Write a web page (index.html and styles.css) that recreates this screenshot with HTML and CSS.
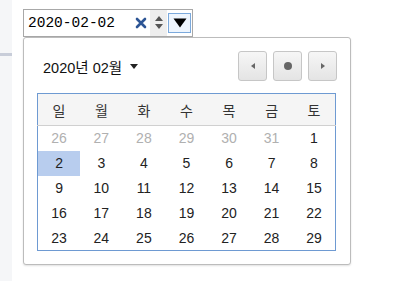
FILE: index.html
```html
<!DOCTYPE html>
<html lang="ko">
<head>
  <meta charset="UTF-8">
  <title>날짜 선택</title>
  <link rel="stylesheet" href="styles.css">
</head>
<body>
  <aside class="side">
    <div class="side-bar"></div>
  </aside>

  <div class="main">
    <div class="field">
      <span class="value">2020-02-02</span>
      <span class="clear">
        <svg width="12" height="12" viewBox="0 0 12 12"><path d="M2 2 L10 10 M10 2 L2 10" stroke="#2d5595" stroke-width="2.6" stroke-linecap="round"/></svg>
      </span>
      <span class="spin">
        <svg width="10" height="16" viewBox="0 0 10 16"><path d="M1 6 L5 1 L9 6 Z M1 9 L9 9 L5 14 Z" fill="#555"/></svg>
      </span>
      <span class="drop">
        <svg width="14" height="10" viewBox="0 0 14 10"><path d="M0.5 0.5 L13.5 0.5 L7 9.5 Z" fill="#000"/></svg>
      </span>
    </div>

    <div class="popup">
      <div class="popup-head">
        <div class="title">2020년 02월
          <svg width="8" height="5" viewBox="0 0 8 5"><path d="M0 0 L8 0 L4 5 Z" fill="#222"/></svg>
        </div>
        <div class="nav">
          <button type="button" class="nav-btn"><svg width="4" height="6" viewBox="0 0 4 6"><path d="M4 0 L0 3 L4 6 Z" fill="#666"/></svg></button>
          <button type="button" class="nav-btn"><svg width="8" height="8" viewBox="0 0 8 8"><circle cx="4" cy="4" r="4" fill="#666"/></svg></button>
          <button type="button" class="nav-btn"><svg width="4" height="6" viewBox="0 0 4 6"><path d="M0 0 L4 3 L0 6 Z" fill="#666"/></svg></button>
        </div>
      </div>

      <table class="cal">
        <tr><th>일</th><th>월</th><th>화</th><th>수</th><th>목</th><th>금</th><th>토</th></tr>
        <tr><td class="other">26</td><td class="other">27</td><td class="other">28</td><td class="other">29</td><td class="other">30</td><td class="other">31</td><td>1</td></tr>
        <tr><td class="selected">2</td><td>3</td><td>4</td><td>5</td><td>6</td><td>7</td><td>8</td></tr>
        <tr><td>9</td><td>10</td><td>11</td><td>12</td><td>13</td><td>14</td><td>15</td></tr>
        <tr><td>16</td><td>17</td><td>18</td><td>19</td><td>20</td><td>21</td><td>22</td></tr>
        <tr><td>23</td><td>24</td><td>25</td><td>26</td><td>27</td><td>28</td><td>29</td></tr>
      </table>
    </div>
  </div>
</body>
</html>
```

FILE: styles.css
```css
* {
  margin: 0;
  padding: 0;
  box-sizing: border-box;
}

body {
  font-family: "Liberation Sans", "Noto Sans CJK KR", sans-serif;
  background-color: #fff;
  color: #222;
  display: flex;
  min-height: 100vh;
}

.side {
  width: 12px;
  background-color: #f5f6f8;
  padding-top: 53px;
}

.side-bar {
  height: 3px;
  background-color: #c8cdd9;
}

.main {
  padding: 9px 0 0 11px;
}

.field {
  width: 170px;
  height: 28px;
  border: 1px solid #a8a8a8;
  display: flex;
  align-items: center;
  background-color: #fff;
}

.value {
  flex: 1;
  padding-left: 4px;
  font-family: "Liberation Mono", monospace;
  font-size: 14.5px;
  color: #000;
}

.clear {
  width: 12px;
  height: 12px;
  margin-right: 3px;
  display: flex;
}

.spin {
  width: 17px;
  align-self: stretch;
  background-color: #eeeeee;
  display: flex;
  align-items: center;
  justify-content: center;
}

.drop {
  width: 23px;
  height: 20px;
  margin: 0 1px 0 1px;
  border: 1px solid #7ba9dc;
  background-color: #eef5fd;
  display: flex;
  align-items: center;
  justify-content: center;
}

.popup {
  width: 328px;
  border: 1px solid #bcbcbc;
  border-radius: 3px;
  box-shadow: 0 1px 2px rgba(0, 0, 0, 0.12);
  padding: 0 13px 13px 13px;
  background-color: #fff;
}

.popup-head {
  display: flex;
  align-items: center;
  justify-content: space-between;
  padding: 13px 0 12px 6px;
}

.title {
  font-size: 14.5px;
  color: #111;
  display: flex;
  align-items: center;
  gap: 8px;
}

.nav {
  display: flex;
  gap: 6px;
}

.nav-btn {
  width: 29px;
  height: 30px;
  border: 1px solid #c6c6c6;
  border-radius: 3px;
  background: linear-gradient(#f6f6f6, #e4e4e4);
  display: flex;
  align-items: center;
  justify-content: center;
}

.cal {
  width: 299px;
  border-collapse: collapse;
  border: 1px solid #6e9ad2;
  table-layout: fixed;
}

.cal th {
  height: 32px;
  background-color: #f5f5f5;
  border-top: 1px solid #6e9ad2;
  border-bottom: 1px solid #d0d0d0;
  font-weight: normal;
  font-size: 14px;
  color: #333;
  text-align: center;
}

.cal td {
  height: 25px;
  font-size: 14px;
  color: #222;
  text-align: center;
}

.cal td.other {
  color: #b0b0b0;
}

.cal td.selected {
  background-color: #b8cdee;
}
```
